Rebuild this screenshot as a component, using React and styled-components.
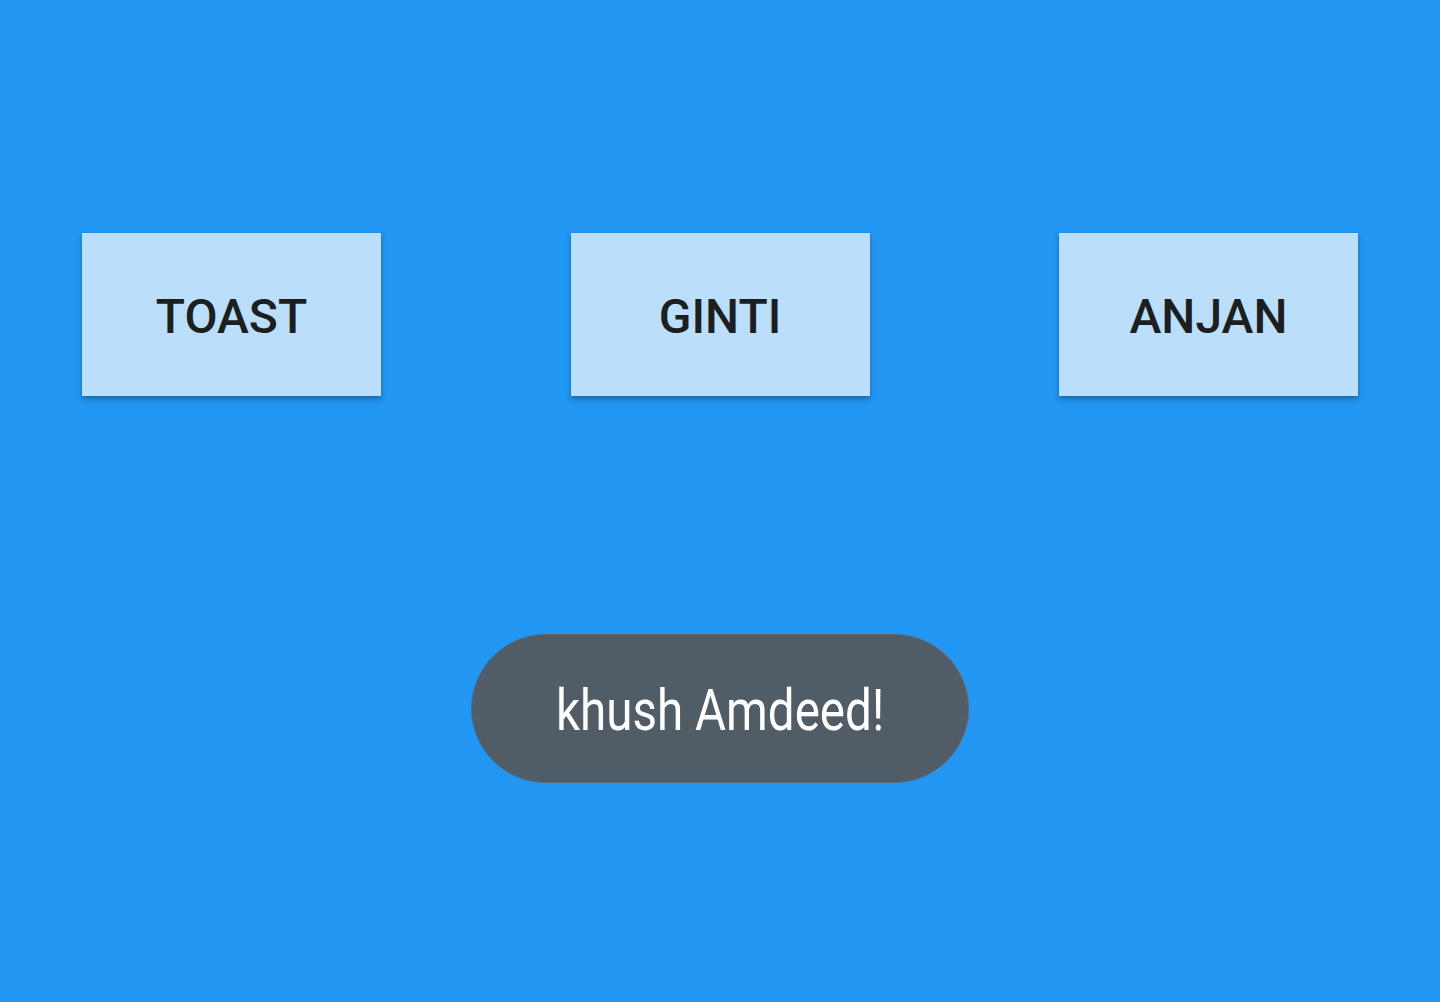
import React from "react";
import styled, { createGlobalStyle } from "styled-components";

const GlobalStyle = createGlobalStyle`
  html, body {
    margin: 0;
    padding: 0;
    background: #2196f3;
  }
`;

const Page = styled.main`
  display: flex;
  flex-direction: column;
  align-items: center;
  width: 1440px;
  height: 1002px;
  box-sizing: border-box;
  padding-top: 233px;
  background: #2196f3;
  font-family: Roboto, "Liberation Sans", sans-serif;
`;

const ButtonRow = styled.div`
  display: flex;
  justify-content: space-between;
  width: 100%;
  box-sizing: border-box;
  padding: 0 82px;
`;

const ActionButton = styled.button`
  display: flex;
  align-items: center;
  justify-content: center;
  width: 299px;
  height: 163px;
  padding: 4px 0 0;
  border: none;
  border-radius: 0;
  background: #bbdefb;
  color: #1b1f20;
  font-family: Roboto, "Liberation Sans", sans-serif;
  font-size: 48px;
  font-weight: 500;
  box-shadow: 0 4px 6px rgba(0, 0, 0, 0.22), 0 1px 3px rgba(0, 0, 0, 0.12);
  cursor: pointer;
`;

const Toast = styled.div`
  display: flex;
  align-items: center;
  justify-content: center;
  margin-top: 238px;
  width: 498px;
  height: 149px;
  box-sizing: border-box;
  border-radius: 75px;
  border: 1px solid #5a6a78;
  background: #505c66;
`;

const ToastText = styled.span`
  display: inline-block;
  color: #ffffff;
  font-family: Roboto, "Liberation Sans", sans-serif;
  font-size: 58px;
  font-weight: 400;
  transform: scaleX(0.82);
  margin-top: 2px;
`;

export default function App() {
  const buttons = ["TOAST", "GINTI", "ANJAN"];

  return (
    <>
      <GlobalStyle />
      <Page>
        <ButtonRow>
          {buttons.map((label) => (
            <ActionButton key={label}>{label}</ActionButton>
          ))}
        </ButtonRow>
        <Toast>
          <ToastText>khush Amdeed!</ToastText>
        </Toast>
      </Page>
    </>
  );
}
